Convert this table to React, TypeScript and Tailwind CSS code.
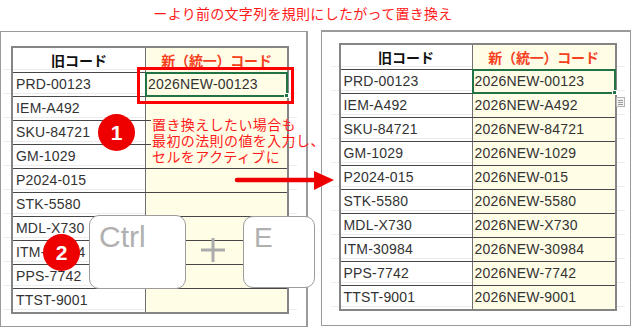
import React from "react";

const OLD = ["PRD-00123", "IEM-A492", "SKU-84721", "GM-1029", "P2024-015", "STK-5580", "MDL-X730", "ITM-30984", "PPS-7742", "TTST-9001"];
const NEW = OLD.map((c) => "2026NEW-" + c.split("-")[1]);

const font = { fontFamily: "'Liberation Sans', 'Noto Sans CJK JP', sans-serif" };
const jp = { fontFamily: "'Noto Sans CJK JP', sans-serif" };

function Sheet({ filled, left }: { filled: boolean; left: number }) {
  return (
    <div className="border-2 border-[#858585] w-[278px] text-[14px] text-[#333] tracking-[0.2px]" style={font}>
      <div className="flex h-[24px] items-center font-bold tracking-normal" style={jp}>
        <div className="h-full flex items-center justify-center border-r border-[#707070] text-[#111]" style={{ width: left }}>
          旧コード
        </div>
        <div className="h-full flex-1 flex items-center justify-center bg-[#fffde6] text-[#f5401e] tracking-[-0.2px]">
          新（統一）コード
        </div>
      </div>
      {OLD.map((code, i) => (
        <div key={code} className="flex h-[24px] border-t border-[#474747]">
          <div className="h-full flex items-center pl-[3px] border-r border-[#707070]" style={{ width: left }}>
            {code}
          </div>
          <div className="relative h-full flex-1 flex items-center pl-[2px] bg-[#fffde6]">
            {filled || i === 0 ? NEW[i] : ""}
            {i === 0 && (
              <div className="absolute -left-[1px] -top-[1px] -right-[1px] -bottom-[1px] border-2 border-[#217346]">
                <div className="absolute -right-[3px] -bottom-[3px] w-[5px] h-[5px] bg-[#217346] border border-white" />
              </div>
            )}
          </div>
        </div>
      ))}
    </div>
  );
}

function Grid({ children }: { children: React.ReactNode }) {
  return (
    <div className="bg-[repeating-linear-gradient(to_bottom,transparent_0,transparent_23px,#ececec_23px,#ececec_24px)] px-[8px] -mx-[8px] w-fit">
      {children}
    </div>
  );
}

function Circle({ n }: { n: string }) {
  return (
    <div className="w-[37px] h-[37px] shrink-0 rounded-full bg-[#ee0000] flex items-center justify-center text-white text-[21px] font-bold">
      {n}
    </div>
  );
}

export default function App() {
  return (
    <div className="relative w-[631px] h-[327px] bg-white overflow-hidden" style={font}>
      <div className="h-[31px] pt-[3px] pr-[25px] text-center text-[14px] leading-[20px] tracking-[0.3px] text-[#ff1a1a]" style={jp}>
        ーより前の文字列を規則にしたがって置き換え
      </div>

      <div className="flex gap-[13px]">
        <div className="w-[309px] h-[296px] border border-r-2 border-[#9a9a9a] pl-[10px] pt-[14px]">
          <Grid>
            <Sheet filled={false} left={133} />
          </Grid>
        </div>
        <div className="w-[312px] h-[296px] -mt-[1px] border border-t-2 border-[#9a9a9a] pl-[17px] pt-[11px]">
          <Grid>
            <Sheet filled={true} left={132} />
          </Grid>
        </div>
      </div>

      {/* flash fill option button */}
      <div className="absolute left-[616px] top-[97px] w-[9px] h-[10px] border border-[#b5b5b5] bg-[#f4f4f4] flex flex-col justify-center gap-[1px] px-[1px]">
        <div className="h-px bg-[#9a9a9a]" />
        <div className="h-px bg-[#9a9a9a]" />
        <div className="h-px bg-[#9a9a9a]" />
      </div>

      {/* red highlight box */}
      <div className="absolute left-[137px] top-[67px] w-[157px] h-[37px] border-[3px] border-[#ff0000]" />

      {/* callout 1 */}
      <div className="absolute left-[98px] top-[114px] flex items-start gap-[16px]">
        <Circle n="1" />
        <div className="w-[136px] h-[47px] mt-[2px] bg-[#fffde6] pl-px text-[14px] leading-[16px] tracking-[0.4px] text-[#ff1a1a] whitespace-nowrap" style={jp}>
          置き換えしたい場合も
          <br />
          最初の法則の値を入力し、
          <br />
          セルをアクティブに
        </div>
      </div>

      {/* arrow */}
      <svg className="absolute left-[230px] top-[166px]" width="108" height="28" viewBox="0 0 108 28">
        <line x1="7" y1="14" x2="88" y2="14" stroke="#ee0000" strokeWidth="4.5" strokeLinecap="round" />
        <polygon points="84,5 104,14 84,24" fill="#ee0000" />
      </svg>

      {/* keys */}
      <div className="absolute left-[89px] top-[215px] flex items-start">
        <div className="w-[97px] h-[74px] rounded-[10px] border border-[#9c9c9c] bg-white pl-[9px] pt-[6px] text-[30px] leading-[30px] text-[#b0b0b0]">
          Ctrl
        </div>
        <svg className="mt-[22px] ml-[14px] mr-[17px]" width="26" height="26" viewBox="0 0 26 26">
          <line x1="13" y1="1" x2="13" y2="25" stroke="#ababab" strokeWidth="3" />
          <line x1="1" y1="13" x2="25" y2="13" stroke="#ababab" strokeWidth="3" />
        </svg>
        <div className="w-[72px] h-[72px] mt-px rounded-[10px] border border-[#9c9c9c] bg-white pl-[10px] pt-[7px] text-[28px] leading-[28px] text-[#b0b0b0]">
          E
        </div>
      </div>
      <div className="absolute left-[43px] top-[234px]">
        <Circle n="2" />
      </div>
    </div>
  );
}
